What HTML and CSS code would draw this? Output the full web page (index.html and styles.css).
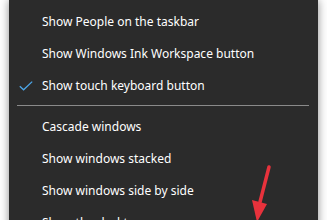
FILE: index.html
```html
<!DOCTYPE html>
<html>
<head>
<meta charset="utf-8">
<link rel="stylesheet" href="styles.css">
</head>
<body>
<div class="menu">
  <div class="item"><span class="check"></span><span class="label">Show People on the taskbar</span></div>
  <div class="item"><span class="check"></span><span class="label">Show Windows Ink Workspace button</span></div>
  <div class="item"><span class="check"><svg width="14" height="10" viewBox="0 0 14 10"><path d="M0.8 5.2 L4.6 8.8 L13.2 0.6" fill="none" stroke="#4ca6e8" stroke-width="1.3"/></svg></span><span class="label">Show touch keyboard button</span></div>
  <div class="sep"></div>
  <div class="item"><span class="check"></span><span class="label">Cascade windows</span></div>
  <div class="item"><span class="check"></span><span class="label">Show windows stacked</span></div>
  <div class="item"><span class="check"></span><span class="label">Show windows side by side</span></div>
  <div class="item"><span class="check"></span><span class="label">Show the desktop</span></div>
</div>
<svg class="arrow" width="40" height="60" viewBox="0 0 40 60">
  <path d="M35 7 L26 42" stroke="#e8323c" stroke-width="3.5" stroke-linecap="round" fill="none"/>
  <path d="M18 40 L33 44 L23 62 Z" fill="#e8323c"/>
</svg>
</body>
</html>
```
FILE: styles.css
```css
html, body {
  margin: 0;
  padding: 0;
  background: #ffffff;
  overflow: hidden;
  width: 327px;
  height: 220px;
}
body {
  position: relative;
  font-family: "Noto Sans", "Open Sans", sans-serif;
}
.menu {
  margin-left: 9px;
  width: 309px;
  background: #2b2b2b;
  padding-top: 5px;
  box-shadow: 0 0 9px rgba(0, 0, 0, 0.45);
  height: 260px;
}
.item {
  height: 32px;
  display: flex;
  align-items: center;
  color: #ffffff;
  font-size: 12px;
}
.check {
  width: 33px;
  display: flex;
  justify-content: flex-start;
  box-sizing: border-box;
  padding-left: 10px;
}
.check svg {
  display: block;
  margin-top: 2px;
}
.label {
  white-space: nowrap;
}
.sep {
  height: 9px;
  display: flex;
  align-items: center;
  padding: 0 9px 0 8px;
}
.sep::before {
  content: "";
  flex: 1;
  height: 1px;
  background: #8a8a8a;
}
.arrow {
  position: absolute;
  left: 234px;
  top: 160px;
}
```
